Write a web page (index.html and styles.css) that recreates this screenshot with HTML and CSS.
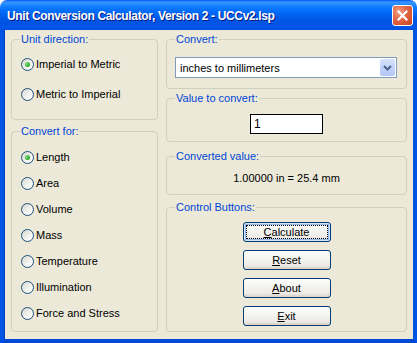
FILE: index.html
```html
<!DOCTYPE html>
<html lang="en">
<head>
  <meta charset="UTF-8">
  <title>Unit Conversion Calculator</title>
  <link rel="stylesheet" href="styles.css">
</head>
<body>
  <div class="window">
    <div class="titlebar">
      <span class="title">Unit Conversion Calculator, Version 2 - UCCv2.lsp</span>
      <button class="close-btn">
        <svg width="11" height="11" viewBox="0 0 11 11"><path d="M1.5 1.5 L9.5 9.5 M9.5 1.5 L1.5 9.5" stroke="#fff" stroke-width="2.2" stroke-linecap="square"/></svg>
      </button>
    </div>

    <div class="client">
      <div class="col col-left">
        <div class="group grp-direction">
          <span class="group-title">Unit direction:</span>
          <div class="group-body">
            <label class="option"><span class="radio on"></span>Imperial to Metric</label>
            <label class="option"><span class="radio"></span>Metric to Imperial</label>
          </div>
        </div>

        <div class="group grp-for">
          <span class="group-title">Convert for:</span>
          <div class="group-body">
            <label class="option"><span class="radio on"></span>Length</label>
            <label class="option"><span class="radio"></span>Area</label>
            <label class="option"><span class="radio"></span>Volume</label>
            <label class="option"><span class="radio"></span>Mass</label>
            <label class="option"><span class="radio"></span>Temperature</label>
            <label class="option"><span class="radio"></span>Illumination</label>
            <label class="option"><span class="radio"></span>Force and Stress</label>
          </div>
        </div>
      </div>

      <div class="col col-right">
        <div class="group grp-convert">
          <span class="group-title">Convert:</span>
          <div class="group-body">
            <div class="combo">
              <span class="combo-text">inches to millimeters</span>
              <span class="combo-btn">
                <svg width="9" height="6" viewBox="0 0 9 6"><path d="M1 1 L4.5 4.5 L8 1" fill="none" stroke="#4d6185" stroke-width="2"/></svg>
              </span>
            </div>
          </div>
        </div>

        <div class="group grp-value">
          <span class="group-title">Value to convert:</span>
          <div class="group-body center">
            <div class="edit">1</div>
          </div>
        </div>

        <div class="group grp-result">
          <span class="group-title">Converted value:</span>
          <div class="group-body center">
            <span class="result">1.00000 in = 25.4 mm</span>
          </div>
        </div>

        <div class="group grp-buttons">
          <span class="group-title">Control Buttons:</span>
          <div class="group-body buttons">
            <button class="btn focus"><u>C</u>alculate</button>
            <button class="btn"><u>R</u>eset</button>
            <button class="btn"><u>A</u>bout</button>
            <button class="btn"><u>E</u>xit</button>
          </div>
        </div>
      </div>
    </div>
  </div>
</body>
</html>
```

FILE: styles.css
```css
body {
  margin: 0;
  background: #fff;
  font-family: 'Liberation Sans', Arial, sans-serif;
  font-size: 11px;
  color: #000;
}

.window {
  width: 417px;
  height: 343px;
  display: flex;
  flex-direction: column;
  border-radius: 7px 7px 0 0;
  overflow: hidden;
}

.titlebar {
  height: 30px;
  flex-shrink: 0;
  display: flex;
  align-items: flex-start;
  justify-content: space-between;
  padding: 0 4px 0 7px;
  background: linear-gradient(to bottom, #0058ee 0%, #3a93ff 7%, #288eff 13%, #127dff 22%, #036ffc 35%, #0262ee 50%, #0057e5 65%, #0054e3 80%, #0055eb 92%, #0050d8 100%);
}

.title {
  margin-top: 8px;
  color: #fff;
  font-weight: bold;
  font-size: 12px;
  line-height: 16px;
  text-shadow: 1px 1px 0 #0a1883;
  letter-spacing: -0.35px;
}

.close-btn {
  margin-top: 5px;
  width: 21px;
  height: 21px;
  padding: 0;
  border: 1px solid #fff;
  border-radius: 3px;
  background: radial-gradient(circle at 30% 30%, #f0a080 0%, #e26a48 40%, #c9401f 100%);
  display: flex;
  align-items: center;
  justify-content: center;
}

.client {
  flex: 1;
  display: flex;
  gap: 8px;
  padding: 9px 6px 0 7px;
  background: #ece9d8;
  border-left: 4px solid #0054e3;
  border-right: 4px solid #0054e3;
  border-bottom: 4px solid #0048d6;
  box-shadow: inset 1px 0 0 #0a3cc8;
}

.col {
  display: flex;
  flex-direction: column;
}

.col-left {
  width: 147px;
}

.col-right {
  width: 241px;
}

.group {
  box-sizing: border-box;
  border: 1px solid #d0d0bf;
  border-radius: 4px;
}

.group-title {
  display: block;
  width: fit-content;
  margin: -7px 0 0 8px;
  padding: 0 1px;
  line-height: 13px;
  background: #ece9d8;
  color: #0046d5;
}

.group-body.center {
  display: flex;
  justify-content: center;
}

/* left column */
.grp-direction {
  height: 81px;
}

.grp-direction .group-body {
  padding-top: 3px;
}

.grp-direction .option {
  height: 30px;
}

.grp-for {
  height: 201px;
  margin-top: 11px;
}

.grp-for .group-body {
  padding-top: 6px;
}

.grp-for .option {
  height: 26px;
}

.option {
  display: flex;
  align-items: center;
  gap: 2px;
  padding-left: 9px;
}

.radio {
  width: 13px;
  height: 13px;
  box-sizing: border-box;
  border: 1px solid #1c5180;
  border-radius: 50%;
  background: linear-gradient(135deg, #d6d5cd 0%, #f2f2ee 55%, #fff 100%);
  display: flex;
  align-items: center;
  justify-content: center;
}

.radio.on::after {
  content: '';
  width: 5px;
  height: 5px;
  border-radius: 50%;
  background: radial-gradient(circle at 35% 35%, #7ee27a 0%, #3cb038 55%, #1e931c 100%);
}

/* right column */
.grp-convert {
  height: 50px;
}

.grp-convert .group-body {
  padding: 11px 0 0 8px;
}

.combo {
  width: 222px;
  height: 21px;
  box-sizing: border-box;
  border: 1px solid #7f9db9;
  background: #fff;
  display: flex;
  align-items: center;
  justify-content: space-between;
  padding: 1px;
}

.combo-text {
  padding-left: 3px;
}

.combo-btn {
  width: 15px;
  height: 17px;
  border-radius: 2px;
  background: linear-gradient(to bottom, #d8e4fc 0%, #c1d3fb 50%, #b4c8f6 100%);
  display: flex;
  align-items: center;
  justify-content: center;
}

.grp-value {
  height: 44px;
  margin-top: 9px;
}

.grp-value .group-body {
  padding-top: 9px;
}

.edit {
  width: 73px;
  height: 20px;
  box-sizing: border-box;
  border: 1px solid #000;
  background: #fff;
  padding: 2px 0 0 3px;
  font-size: 12px;
  line-height: 15px;
}

.grp-result {
  height: 39px;
  margin-top: 14px;
}

.grp-result .group-body {
  padding-top: 9px;
}

.result {
  line-height: 13px;
}

.grp-buttons {
  height: 125px;
  margin-top: 12px;
}

.group-body.buttons {
  padding-top: 8px;
  display: flex;
  flex-direction: column;
  align-items: center;
  gap: 8px;
}

.btn {
  position: relative;
  width: 88px;
  height: 20px;
  padding: 0;
  border: 1px solid #003c74;
  border-radius: 3px;
  background: linear-gradient(to bottom, #fff 0%, #f4f4f0 40%, #ecebe6 80%, #d6d0c5 100%);
  font-family: 'Liberation Sans', Arial, sans-serif;
  font-size: 11px;
  color: #000;
}

.btn.focus {
  box-shadow: inset 0 0 0 1px #cee7ff, inset 0 0 0 2px #98b8ea;
}

.btn.focus::after {
  content: '';
  position: absolute;
  inset: 2px;
  border: 1px dotted #000;
}
```
